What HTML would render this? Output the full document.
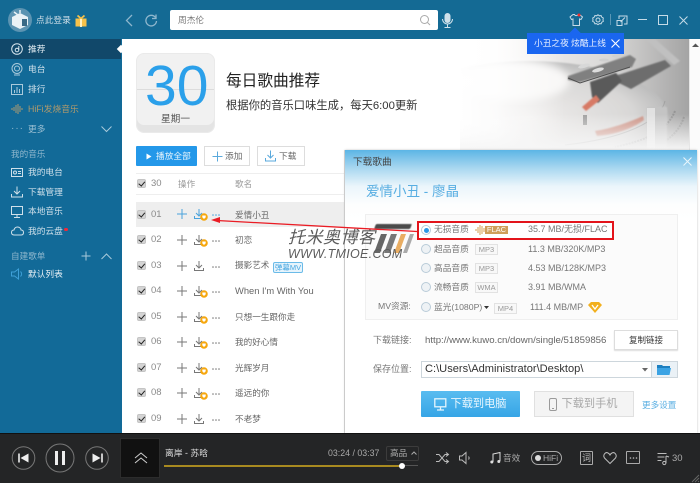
<!DOCTYPE html>
<html lang="zh"><head><meta charset="utf-8"><title>酷我音乐</title>
<style>
html,body{margin:0;padding:0;width:700px;height:483px;overflow:hidden;background:#fff}
body{position:relative;font-family:"Liberation Sans","Noto Sans CJK SC",sans-serif;font-size:9px;color:#555}
.a{position:absolute;white-space:nowrap;line-height:1}
.box{position:absolute}
svg{position:absolute;overflow:visible}
.s{color:#cfe0ea;font-size:8.7px;left:28px}
.c{position:absolute;left:137px;width:9px;height:9px;background:#d4d4d4;border:1px solid #c4c4c4;border-radius:2px;box-sizing:border-box}
.c:after{content:"";position:absolute;left:2px;top:0;width:2.5px;height:4.5px;border:solid #222;border-width:0 1.6px 1.6px 0;transform:rotate(40deg)}
.n{left:151px;color:#8a8a8a;font-size:9.5px}
.t{left:235px;color:#666;font-size:8.6px}
.q{left:434px;color:#777;font-size:8.7px}
.tag{position:absolute;border:1px solid #e2e2e2;background:#f8f8f8;color:#999;font-size:7.5px;line-height:9px;text-align:center;height:9px;width:21px}
.sz{color:#777;font-size:9px}
.r{position:absolute;left:421px;width:8px;height:8px;border-radius:50%;border:1px solid #b9cbd8;background:#eef2f5}
</style></head><body>

<!-- top bar + sidebar -->
<div class="box" style="left:0;top:0;width:700px;height:39px;background:#146a94"></div>
<div class="box" style="left:0;top:39px;width:122px;height:394px;background:#126a98"></div>
<div class="box" style="left:0;top:39px;width:121px;height:20px;background:#11486a"></div>
<div class="box" style="left:118px;top:46px;width:6px;height:6px;background:#fff;transform:rotate(45deg)"></div>

<!-- avatar -->
<div class="box" style="left:8px;top:8px;width:24px;height:24px;border-radius:50%;background:#5c94b2"></div>
<svg style="left:8px;top:8px" width="24" height="24"><path d="M4 9l8-4 8 4v8l-8 4-8-4z" fill="#eaf2f6"/><path d="M14 11h5v7h-5z" fill="#3a6a86"/><path d="M6 4l4 3M12 2v3" stroke="#eaf2f6" stroke-width="1.500"/></svg>
<div class="a" style="left:36px;top:16px;color:#cfdfe8;font-size:8.700px">点此登录</div>
<svg style="left:75px;top:15px" width="12" height="12"><rect x="0.500" y="3.500" width="11" height="8" fill="#f7c24a"/><rect x="5" y="3" width="2" height="9" fill="#fff3c4"/><path d="M6 3.500L2.500 .5M6 3.500l3.500-3" stroke="#f7c24a" stroke-width="1.800"/></svg>

<!-- nav arrows -->
<svg style="left:125px;top:14px" width="14" height="14"><path d="M7 1L1.500 6.500 7 12" fill="none" stroke="#8fb7cd" stroke-width="1.300"/></svg>
<svg style="left:143px;top:13px" width="16" height="16"><path d="M12.500 4.500A5.300 5.300 0 1 0 13.500 8" fill="none" stroke="#8fb7cd" stroke-width="1.300"/><path d="M13 1.500v4h-4" fill="none" stroke="#8fb7cd" stroke-width="1.300"/></svg>

<!-- search -->
<div class="box" style="left:170px;top:10px;width:268px;height:20px;background:#fff;border-radius:2px"></div>
<div class="a" style="left:178px;top:16px;color:#777;font-size:8.700px">周杰伦</div>
<svg style="left:419px;top:14px" width="12" height="12"><circle cx="5.500" cy="5.500" r="4" fill="none" stroke="#aaa" stroke-width="1"/><path d="M8.500 8.500l2.500 2.500" stroke="#aaa"/></svg>
<svg style="left:441px;top:12px" width="13" height="17"><rect x="3.500" y="1" width="6" height="10" rx="3" fill="#cfe0ea"/><path d="M1.500 7a5 5 0 0 0 10 0M6.500 12v3M3.500 15.500h6" fill="none" stroke="#cfe0ea"/></svg>

<!-- window controls -->
<svg style="left:569px;top:13px" width="14" height="14"><path d="M4 1.500L1 4l1.500 2.500L4 6v6.500h6.500V6l1.500.5L13.500 4 10.500 1.500H9c-.5 1.500-3 1.500-3.500 0z" fill="none" stroke="#c6dbe7"/><circle cx="10" cy="2" r="1.500" fill="#ee2b2b"/></svg>
<svg style="left:592px;top:14px" width="12" height="12"><circle cx="6" cy="6" r="2" fill="none" stroke="#c6dbe7"/><path d="M6 .8l1.400 1 1.700-.2.700 1.600 1.500.8-.3 1.700.3 1.700-1.500.8-.7 1.600-1.700-.2-1.400 1-1.400-1-1.700.2-.7-1.600-1.500-.8.3-1.700-.3-1.700 1.500-.8.7-1.600 1.700.2z" fill="none" stroke="#c6dbe7"/></svg>
<div class="box" style="left:610px;top:14px;width:1px;height:11px;background:#5b97b6"></div>
<svg style="left:616px;top:15px" width="12" height="11"><path d="M3 4V1h8v8H8M1 5.500h5v5H1z" fill="none" stroke="#c6dbe7"/><path d="M9 2.500L4.500 7" stroke="#c6dbe7"/></svg>
<div class="box" style="left:638px;top:19px;width:9px;height:1px;background:#c6dbe7"></div>
<div class="box" style="left:658px;top:15px;width:8px;height:8px;border:1px solid #c6dbe7"></div>
<svg style="left:679px;top:16px" width="9" height="9"><path d="M.500.500l8 8M8.500.500l-8 8" stroke="#c6dbe7"/></svg>

<!-- main hero -->
<div class="box" style="left:122px;top:39px;width:578px;height:394px;background:#fff"></div>
<svg style="left:460px;top:39px;overflow:hidden" width="229" height="111" viewBox="-10 0 229 111">
<defs>
<linearGradient id="fd" x1="0" x2="1" y1="0" y2="0"><stop offset="0" stop-color="#fff"/><stop offset=".3" stop-color="#f1efee"/><stop offset=".65" stop-color="#d9d8d7"/><stop offset="1" stop-color="#a4a4a4"/></linearGradient>
<linearGradient id="fl" x1="0" x2="1" y1="0" y2="0"><stop offset="0" stop-color="#fff"/><stop offset=".35" stop-color="#fff" stop-opacity=".85"/><stop offset="1" stop-color="#fff" stop-opacity="0"/></linearGradient>
<linearGradient id="fb" x1="0" x2="0" y1="0" y2="1"><stop offset="0" stop-color="#fff" stop-opacity="0"/><stop offset="1" stop-color="#f6f6f6"/></linearGradient>
<radialGradient id="rec" cx=".5" cy=".5" r=".5"><stop offset="0" stop-color="#eeeceb"/><stop offset=".75" stop-color="#d8d7d6"/><stop offset="1" stop-color="#bcbcbc"/></radialGradient>
<filter id="bl"><feGaussianBlur stdDeviation=".7"/></filter>
<filter id="bl3"><feGaussianBlur stdDeviation="4"/></filter>
</defs>
<rect x="-10" width="229" height="111" fill="url(#fd)"/>
<ellipse cx="60" cy="78" rx="138" ry="56" fill="url(#rec)" filter="url(#bl)"/>
<ellipse cx="45" cy="42" rx="55" ry="20" fill="#f8f7f6" filter="url(#bl3)"/>
<path d="M195 62c-5 22-45 38-100 44" fill="none" stroke="#8a8a8a" opacity=".45"/>
<path d="M205 72c-8 20-30 30-60 36M214 78c-6 18-20 26-35 33" fill="none" stroke="#777" stroke-width="2" stroke-dasharray="2 1" opacity=".45"/>
<path d="M125 92c15-2 35-9 48-15l1 4c-12 9-30 15-47 16z" fill="#c8806f" filter="url(#bl)" opacity=".8"/>
<path d="M175 0h10l25 22-6 4z" fill="#c0c0c0" filter="url(#bl)"/>
<path d="M145 37l50-16 6 6-40 23-12-6z" fill="#6d6d6d" filter="url(#bl)"/>
<path d="M98 37l62-21 6 4-4 8-52 15-12-2z" fill="#808080" filter="url(#bl)"/>
<path d="M98 39l12 5 50-16" fill="none" stroke="#4f4f4f"/>
<ellipse cx="114" cy="27" rx="6" ry="2" fill="#d8d8d8" transform="rotate(-15 114 27)"/>
<ellipse cx="128" cy="31" rx="6" ry="2" fill="#ddd" transform="rotate(-15 128 31)"/>
<ellipse cx="134" cy="21" rx="5" ry="1.500" fill="#d0d0d0"/><ellipse cx="147" cy="17" rx="5" ry="1.500" fill="#d0d0d0"/>
<path d="M120 43l26-9 6 8-24 22-6-6z" fill="#5a5a5a" filter="url(#bl)"/>
<path d="M112 68l14-12 4 5-14 11z" fill="#d77a66" filter="url(#bl)"/>
<path d="M113 76h4v10h-4z" fill="#777" opacity=".6"/>
<rect x="177" y="68" width="20" height="43" fill="#c4c4c4" filter="url(#bl)"/>
<rect x="177" y="69" width="8" height="42" fill="#eee" opacity=".7"/>
<rect x="-10" width="105" height="111" fill="url(#fl)"/>
<rect x="-10" y="75" width="229" height="36" fill="url(#fb)"/>
</svg>

<!-- calendar -->
<div class="box" style="left:137px;top:54px;width:77px;height:78px;background:#f1f1f1;border-radius:7px;box-shadow:inset 0 -7px 0 #e4e4e4,0 0 0 1px #eaeaea"></div>
<div class="box" style="left:137px;top:89px;width:77px;height:1px;background:#dcdcdc"></div>
<div class="a" style="left:145px;top:58px;color:#2ba0ea;font-size:57px;width:61px;text-align:center">30</div>
<div class="a" style="left:161px;top:114.500px;color:#555;font-size:9.700px">星期一</div>
<div class="a" style="left:226px;top:74px;color:#222;font-size:15.700px">每日歌曲推荐</div>
<div class="a" style="left:226px;top:101px;color:#333;font-size:11.300px">根据你的音乐口味生成，每天6:00更新</div>

<!-- action buttons -->
<div class="box" style="left:136px;top:146px;width:61px;height:20px;background:#2498e9;border-radius:1px"></div>
<svg style="left:146px;top:153px" width="6" height="7"><path d="M.500 .500l5 3-5 3z" fill="#fff"/></svg>
<div class="a" style="left:156px;top:152px;color:#e8f4fc;font-size:8.700px">播放全部</div>
<div class="box" style="left:204px;top:146px;width:46px;height:20px;border:1px solid #ddd;box-sizing:border-box"></div>
<svg style="left:212px;top:151px" width="11" height="11"><path d="M5.500.500v10M.500 5.500h10" stroke="#5aa9dc"/></svg>
<div class="a" style="left:225px;top:152px;color:#666;font-size:8.700px">添加</div>
<div class="box" style="left:257px;top:146px;width:48px;height:20px;border:1px solid #ddd;box-sizing:border-box"></div>
<svg style="left:265px;top:150px" width="11" height="12"><path d="M5.500.500v7M2.500 5l3 3 3-3M.500 8v3h10V8" fill="none" stroke="#5aa9dc"/></svg>
<div class="a" style="left:279px;top:152px;color:#666;font-size:8.700px">下载</div>

<!-- table header -->
<div class="box" style="left:136px;top:173px;width:209px;height:1px;background:#eee"></div>
<div class="box" style="left:136px;top:194px;width:209px;height:1px;background:#eee"></div>
<div class="c" style="top:179px"></div>
<div class="a n" style="top:179px">30</div>
<div class="a" style="left:178px;top:180px;color:#999;font-size:8.600px">操作</div>
<div class="a" style="left:235px;top:180px;color:#999;font-size:8.600px">歌名</div>
<div class="box" style="left:136px;top:202px;width:209px;height:25px;background:#eeeeee"></div>
<div class="box" style="left:344px;top:150px;width:1px;height:283px;background:#ddd"></div>

<!-- defs for row icons -->
<svg width="0" height="0" style="left:0;top:0"><defs>
<g id="pl"><path d="M5 0v10M0 5h10" stroke="currentColor" stroke-width="1"/></g>
<g id="dl"><path d="M5 .500v6.500M2 4.500l3 3 3-3M.500 7.500v2.500h9V7.500" fill="none" stroke="currentColor"/></g>
<g id="bd"><circle cx="4" cy="4" r="3.800" fill="#f6a70e"/><path d="M2.300 2.500h3.400v1.800L4 6 2.300 4.300z" fill="#fff"/></g>
<g id="dt"><circle cx="1" cy="1" r=".8" fill="currentColor"/><circle cx="4" cy="1" r=".8" fill="currentColor"/><circle cx="7" cy="1" r=".8" fill="currentColor"/></g>
</defs></svg>

<!-- rows -->
<div class="c" style="top:210px"></div><div class="a n" style="top:209.500px">01</div>
<svg style="left:177px;top:209px;color:#4aa3dc" width="50" height="14"><use href="#pl"/><use href="#dl" x="17" y="-.5"/><use href="#bd" x="23" y="4"/><use href="#dt" x="35" y="5"/></svg>
<div class="a t" style="top:210.500px">爱情小丑</div>

<div class="c" style="top:235px"></div><div class="a n" style="top:235px">02</div>
<svg style="left:177px;top:235px;color:#777" width="50" height="14"><use href="#pl"/><use href="#dl" x="17" y="-.5"/><use href="#bd" x="23" y="4"/><use href="#dt" x="35" y="5"/></svg>
<div class="a t" style="top:236px">初恋</div>

<div class="c" style="top:261px"></div><div class="a n" style="top:261px">03</div>
<svg style="left:177px;top:261px;color:#777" width="50" height="14"><use href="#pl"/><use href="#dl" x="17" y="-.5"/><use href="#dt" x="35" y="5"/></svg>
<div class="a t" style="top:261px">摄影艺术</div>
<div class="a" style="left:273px;top:262px;width:28px;height:9px;border:1px solid #6bbbe8;border-radius:2px;background:#e7f4fc;color:#46a6e0;font-size:7.500px;line-height:9px;text-align:center">弹幕MV</div>

<div class="c" style="top:286px"></div><div class="a n" style="top:286px">04</div>
<svg style="left:177px;top:286px;color:#777" width="50" height="14"><use href="#pl"/><use href="#dl" x="17" y="-.5"/><use href="#bd" x="23" y="4"/><use href="#dt" x="35" y="5"/></svg>
<div class="a t" style="top:286.500px;font-size:9.350px">When I'm With You</div>

<div class="c" style="top:312px"></div><div class="a n" style="top:312px">05</div>
<svg style="left:177px;top:312px;color:#777" width="50" height="14"><use href="#pl"/><use href="#dl" x="17" y="-.5"/><use href="#bd" x="23" y="4"/><use href="#dt" x="35" y="5"/></svg>
<div class="a t" style="top:313px">只想一生跟你走</div>

<div class="c" style="top:337px"></div><div class="a n" style="top:337px">06</div>
<svg style="left:177px;top:337px;color:#777" width="50" height="14"><use href="#pl"/><use href="#dl" x="17" y="-.5"/><use href="#bd" x="23" y="4"/><use href="#dt" x="35" y="5"/></svg>
<div class="a t" style="top:338px">我的好心情</div>

<div class="c" style="top:363px"></div><div class="a n" style="top:363px">07</div>
<svg style="left:177px;top:363px;color:#777" width="50" height="14"><use href="#pl"/><use href="#dl" x="17" y="-.5"/><use href="#bd" x="23" y="4"/><use href="#dt" x="35" y="5"/></svg>
<div class="a t" style="top:364px">光辉岁月</div>

<div class="c" style="top:388px"></div><div class="a n" style="top:388px">08</div>
<svg style="left:177px;top:388px;color:#777" width="50" height="14"><use href="#pl"/><use href="#dl" x="17" y="-.5"/><use href="#bd" x="23" y="4"/><use href="#dt" x="35" y="5"/></svg>
<div class="a t" style="top:389px">遥远的你</div>

<div class="c" style="top:414px"></div><div class="a n" style="top:414px">09</div>
<svg style="left:177px;top:414px;color:#777" width="50" height="14"><use href="#pl"/><use href="#dl" x="17" y="-.5"/><use href="#dt" x="35" y="5"/></svg>
<div class="a t" style="top:415px">不老梦</div>

<!-- scrollbar -->
<div class="box" style="left:689px;top:39px;width:11px;height:111px;background:#fbfbfb;border-left:1px solid #e6e6e6;box-sizing:border-box"></div>
<svg style="left:692px;top:43px" width="7" height="5"><path d="M0 4l3.500-3.500L7 4z" fill="#555"/></svg>

<!-- sidebar items -->
<svg style="left:11px;top:43px;color:#d7e6ee" width="12" height="12"><circle cx="6" cy="6" r="5.300" fill="none" stroke="currentColor"/><circle cx="6" cy="7" r="1.800" fill="none" stroke="currentColor"/><path d="M7.800 7V3" stroke="currentColor"/></svg>
<div class="a" style="left:28px;top:45px;color:#e4eef4;font-size:8.700px">推荐</div>
<svg style="left:11px;top:63px;color:#a9cadb" width="12" height="13"><circle cx="6" cy="5.500" r="5" fill="none" stroke="currentColor"/><circle cx="6" cy="5.500" r="2.500" fill="none" stroke="currentColor"/><path d="M3 12h6" stroke="currentColor"/></svg>
<div class="a s" style="top:65px">电台</div>
<svg style="left:11px;top:84px;color:#a9cadb" width="12" height="11"><rect x=".500" y=".500" width="11" height="10" fill="none" stroke="currentColor"/><path d="M3.500 9V6M6 9V3M8.500 9V5" stroke="currentColor"/></svg>
<div class="a s" style="top:85px">排行</div>
<svg style="left:11px;top:103px" width="13" height="12"><path d="M1 5v2M3 4v4M5 2v8M7 1v10M9 3v6M11 5v2" stroke="#a99a72"/></svg>
<div class="a" style="left:28px;top:105px;color:#b09a6c;font-size:8.800px">HiFi发烧音乐</div>
<div class="a" style="left:11px;top:124px;color:#8fb7cd;font-size:10px;letter-spacing:1px">···</div>
<div class="a" style="left:28px;top:125px;color:#9cc0d3;font-size:8.700px">更多</div>
<svg style="left:101px;top:126px" width="11" height="7"><path d="M.500.500l5 5 5-5" fill="none" stroke="#a9cadb"/></svg>
<div class="a" style="left:11px;top:150px;color:#8fb7cd;font-size:8.600px">我的音乐</div>
<svg style="left:11px;top:166px;color:#cfe0ea" width="12" height="11"><rect x=".500" y="2.500" width="11" height="8" fill="none" stroke="currentColor"/><circle cx="4" cy="6.500" r="1.500" fill="none" stroke="currentColor"/><path d="M7 5.500h3M7 7.500h3" stroke="currentColor"/></svg>
<div class="a s" style="top:168px">我的电台</div>
<svg style="left:11px;top:186px;color:#cfe0ea" width="12" height="12"><path d="M6 .500v7M3 5l3 3 3-3M.500 8v3h11V8" fill="none" stroke="currentColor"/></svg>
<div class="a s" style="top:187.500px">下载管理</div>
<svg style="left:11px;top:206px;color:#cfe0ea" width="12" height="12"><rect x=".500" y=".500" width="11" height="8" fill="none" stroke="currentColor"/><path d="M3 11.500h6M6 9v2" stroke="currentColor"/></svg>
<div class="a s" style="top:207px">本地音乐</div>
<svg style="left:11px;top:226px;color:#cfe0ea" width="13" height="10"><path d="M3.500 9C1 9 .500 7.500.500 6.500c0-1.500 1-2.500 2.500-2.500C3.500 2 5 1 6.500 1 8.500 1 10 2.500 10 4c1.500 0 2.500 1 2.500 2.500S11.500 9 10 9z" fill="none" stroke="currentColor"/></svg>
<div class="a s" style="top:227px">我的云盘</div>
<div class="box" style="left:64px;top:228px;width:4px;height:3px;border-radius:2px;background:#f02a3a"></div>
<div class="a" style="left:11px;top:252px;color:#8fb7cd;font-size:8.600px">自建歌单</div>
<svg style="left:81px;top:251px" width="10" height="10"><path d="M5 .500v9M.500 5h9" stroke="#a9cadb"/></svg>
<svg style="left:101px;top:253px" width="11" height="7"><path d="M.500 6l5-5 5 5" fill="none" stroke="#a9cadb"/></svg>
<svg style="left:11px;top:268px" width="13" height="12"><path d="M.500 4h3L7.500 1v10l-4-3h-3z" fill="none" stroke="#3ea0d8"/><path d="M9.500 3.500c1.500 1.500 1.500 3.500 0 5" fill="none" stroke="#3ea0d8"/></svg>
<div class="a s" style="top:269.500px;color:#e4eef4">默认列表</div>

<!-- download dialog -->
<div class="box" style="left:345px;top:150px;width:352px;height:283px;background:linear-gradient(#5cb5e5 0,#a8d7f0 18px,#eaf5fb 36px,#fdfefe 55px,#fff 70px);box-shadow:0 0 2px rgba(0,0,0,.25)"></div>
<div class="a" style="left:353px;top:157.500px;color:#444;font-size:9.700px">下载歌曲</div>
<svg style="left:683px;top:157px" width="9" height="9"><path d="M.500.500l8 8M8.500.500l-8 8" stroke="#eaf6fc" stroke-width="1"/></svg>
<div class="a" style="left:366px;top:185px;color:#58aee2;font-size:13.500px">爱情小丑 - 廖晶</div>
<div class="box" style="left:365px;top:214px;width:313px;height:106px;background:#fbfbfb;border:1px solid #efefef;box-sizing:border-box"></div>

<div class="box" style="left:417px;top:221px;width:197px;height:19px;border:2px solid #e3141b;box-sizing:border-box;background:#fff"></div>
<div class="r" style="top:225px;background:#fff"></div>
<div class="box" style="left:423.500px;top:227.500px;width:5px;height:5px;border-radius:50%;background:#2b98e6"></div>
<div class="a q" style="top:225px">无损音质</div>
<svg style="left:475px;top:224px" width="11" height="12"><path d="M1 5v2M3 3v6M5 1v10M7 2v8M9 4v4" stroke="#d59f50"/></svg>
<div class="a" style="left:485px;top:225.500px;width:23px;height:8px;background:#cf9f5b;color:#fff;font-size:7.500px;line-height:8px;text-align:center">FLAC</div>
<div class="a sz" style="left:528px;top:224.500px">35.7 MB/无损/FLAC</div>

<div class="r" style="top:244px"></div><div class="a q" style="top:244.500px">超品音质</div>
<div class="tag" style="left:475px;top:244px">MP3</div><div class="a sz" style="left:528px;top:244.500px">11.3 MB/320K/MP3</div>
<div class="r" style="top:263px"></div><div class="a q" style="top:263.500px">高品音质</div>
<div class="tag" style="left:475px;top:263px">MP3</div><div class="a sz" style="left:528px;top:263.500px">4.53 MB/128K/MP3</div>
<div class="r" style="top:282px"></div><div class="a q" style="top:282.500px">流畅音质</div>
<div class="tag" style="left:475px;top:282px;">WMA</div><div class="a sz" style="left:528px;top:282.500px">3.91 MB/WMA</div>
<div class="a" style="left:378px;top:302px;color:#777;font-size:8.700px">MV资源:</div>
<div class="r" style="top:302px"></div><div class="a q" style="top:303px">蓝光(1080P)</div>
<svg style="left:484px;top:306px" width="5" height="3"><path d="M0 0h5L2.500 3z" fill="#333"/></svg>
<div class="tag" style="left:494px;top:303px">MP4</div>
<div class="a sz" style="left:530px;top:303px">111.4 MB/MP</div>
<svg style="left:588px;top:302px" width="14" height="11"><path d="M0 3l3-3h8l3 3-7 8z" fill="#f2b01e"/><path d="M4 3l3 4 3-4" fill="none" stroke="#fff" stroke-width="1.300"/></svg>

<div class="a" style="left:373px;top:336px;color:#777;font-size:9px">下载链接:</div>
<div class="a" style="left:425px;top:335.500px;color:#666;font-size:9.650px">http://www.kuwo.cn/down/single/51859856</div>
<div class="box" style="left:614px;top:330px;width:64px;height:20px;background:#fff;border:1px solid #ddd;box-sizing:border-box;box-shadow:0 1px 1px #ddd"></div>
<div class="a" style="left:629px;top:336px;color:#333;font-size:8.500px">复制链接</div>

<div class="a" style="left:373px;top:365px;color:#777;font-size:9px">保存位置:</div>
<div class="box" style="left:421px;top:361px;width:231px;height:17px;background:#fff;border:1px solid #cdd6dc;box-sizing:border-box"></div>
<div class="a" style="left:425px;top:364px;color:#333;font-size:11.100px">C:\Users\Administrator\Desktop\</div>
<svg style="left:642px;top:368px" width="6" height="4"><path d="M0 0h6L3 3.500z" fill="#666"/></svg>
<div class="box" style="left:651px;top:361px;width:27px;height:17px;background:#eaf1f6;border:1px solid #cdd6dc;box-sizing:border-box"></div>
<svg style="left:657px;top:364px" width="15" height="11"><path d="M0 1h5l1 1h7v2H0z" fill="#1d7fc0"/><path d="M0 4h14l-1.500 7H0z" fill="#3ba3e4"/></svg>

<div class="box" style="left:421px;top:391px;width:99px;height:26px;background:linear-gradient(#59bcf0,#36a5e6);border-radius:1px"></div>
<svg style="left:434px;top:398px" width="14" height="14"><rect x=".800" y=".800" width="11" height="8" fill="none" stroke="#e5f5fd" stroke-width="1.300"/><path d="M3 12h7M6.500 9.500V12" stroke="#e5f5fd" stroke-width="1.300"/></svg>
<div class="a" style="left:450.500px;top:398.500px;color:#e8f6fe;font-size:11.200px">下载到电脑</div>
<div class="box" style="left:534px;top:391px;width:100px;height:26px;background:#f4f4f4;border:1px solid #e0e0e0;box-sizing:border-box"></div>
<svg style="left:549px;top:398px" width="9" height="14"><rect x=".500" y=".500" width="7" height="12" rx="1.500" fill="none" stroke="#9a9a9a"/><path d="M3 10.500h2" stroke="#9a9a9a"/></svg>
<div class="a" style="left:561.500px;top:398.500px;color:#a8a8a8;font-size:11.200px">下载到手机</div>
<div class="a" style="left:642px;top:400.500px;color:#58aee2;font-size:8.600px">更多设置</div>

<!-- watermark and arrow -->
<div class="box" style="left:375px;top:224px;width:36px;height:5px;background:#4a4a4a;transform:skewX(-20deg);border-radius:1px;filter:blur(.4px)"></div>
<svg style="left:372px;top:231px" width="42" height="22"><path d="M2 22L9 3h6L8 22z" fill="#666"/><path d="M12 22l7-19h6l-7 19z" fill="#777"/><path d="M22 22l7-19h5l-7 19z" fill="#e9ad62"/><path d="M31 22l7-19h4l-7 19z" fill="#aaa"/></svg>
<div class="a" style="left:288px;top:229px;color:#5c5c5c;font-size:17px;font-style:italic;letter-spacing:.5px">托米奥博客</div>
<div class="a" style="left:288px;top:247.500px;color:#5c5c5c;font-size:12.500px;font-style:italic;letter-spacing:.3px">WWW.TMIOE.COM</div>
<svg style="left:0;top:0;pointer-events:none" width="700" height="483"><path d="M417 231.500L217 220.500" stroke="#ea1c24" stroke-width="1.300"/><path d="M211 220l9-3v6z" fill="#ea1c24"/></svg>

<!-- tooltip -->
<div class="box" style="left:527px;top:33px;width:97px;height:21px;background:#1a66f0"></div>
<div class="box" style="left:571px;top:29px;width:8px;height:8px;background:#1a66f0;transform:rotate(45deg)"></div>
<div class="a" style="left:534px;top:39px;color:#eaf1ff;font-size:8.700px">小丑之夜 炫酷上线</div>
<svg style="left:611px;top:39px" width="9" height="9"><path d="M.500.500l8 8M8.500.500l-8 8" stroke="#fff" stroke-width="1.100"/></svg>

<!-- footer player -->
<div class="box" style="left:0;top:433px;width:700px;height:50px;background:#242526;border-top:1px solid #111;box-sizing:border-box"></div>
<svg style="left:0;top:433px;color:#d4d4d4" width="125" height="50">
<circle cx="23.500" cy="25" r="11.300" fill="none" stroke="#777"/>
<path d="M19 20.500v9" stroke="#eee" stroke-width="1.600"/><path d="M28.500 20.500v9l-8-4.500z" fill="#eee"/>
<circle cx="60" cy="25" r="14" fill="none" stroke="#777"/>
<rect x="55" y="18" width="3" height="14" fill="#eee"/><rect x="62" y="18" width="3" height="14" fill="#eee"/>
<circle cx="97" cy="25" r="11.300" fill="none" stroke="#777"/>
<path d="M102 20.500v9" stroke="#eee" stroke-width="1.600"/><path d="M92.500 20.500v9l8-4.500z" fill="#eee"/>
</svg>
<div class="box" style="left:121px;top:439px;width:38px;height:38px;background:#111;box-shadow:0 0 0 1px #2c2c2c"></div>
<svg style="left:134px;top:452px" width="14" height="13"><path d="M1 6l6-5 6 5M1 11l6-5 6 5" fill="none" stroke="#cfcfcf"/></svg>
<div class="a" style="left:165px;top:449px;color:#ddd;font-size:8.800px">离岸 - 苏晗</div>
<div class="box" style="left:164px;top:465px;width:238px;height:1.500px;background:#a88a20"></div>
<div class="box" style="left:402px;top:465px;width:16px;height:1px;background:#555"></div>
<div class="box" style="left:399px;top:462.500px;width:6px;height:6px;border-radius:50%;background:#fff"></div>
<div class="a" style="left:328px;top:449px;color:#aaa;font-size:8.800px">03:24 / 03:37</div>
<div class="box" style="left:386px;top:446px;width:33px;height:15px;border:1px solid #3c3c3c;box-sizing:border-box;border-radius:2px"></div>
<div class="a" style="left:390px;top:449px;color:#aaa;font-size:8.600px">高品</div>
<svg style="left:411px;top:451px" width="6" height="4"><path d="M.500 3.500L3 1l2.500 2.500" fill="none" stroke="#aaa"/></svg>

<svg style="left:436px;top:452px" width="13" height="12"><path d="M0 2.500h3l6 7h3M0 9.500h3l6-7h3" fill="none" stroke="#bbb"/><path d="M10 .500l2.500 2-2.500 2M10 7.500l2.500 2-2.500 2" fill="none" stroke="#bbb"/></svg>
<svg style="left:459px;top:452px" width="12" height="12"><path d="M.500 4h2.500L7 .500v11L3 8H.500z" fill="none" stroke="#bbb"/><path d="M9.500 4.500c.8 1 .8 2 0 3" fill="none" stroke="#bbb"/></svg>
<svg style="left:490px;top:452px" width="11" height="12"><path d="M3 10V2l7-1.500V9" fill="none" stroke="#ddd"/><circle cx="1.800" cy="10" r="1.500" fill="#ddd"/><circle cx="8.800" cy="9.500" r="1.500" fill="#ddd"/></svg>
<div class="a" style="left:503px;top:454px;color:#aaa;font-size:8.600px">音效</div>
<div class="box" style="left:531px;top:451px;width:31px;height:14px;border:1px solid #aaa;border-radius:8px;box-sizing:border-box"></div>
<div class="box" style="left:535px;top:455px;width:6px;height:6px;border-radius:50%;background:#ddd"></div>
<div class="a" style="left:543px;top:454px;color:#aaa;font-size:8.500px">HiFi</div>
<div class="box" style="left:580px;top:451px;width:13px;height:14px;border:1px solid #aaa;border-radius:1px;box-sizing:border-box"></div>
<div class="a" style="left:582px;top:454px;color:#bbb;font-size:9px">词</div>
<svg style="left:603px;top:452px" width="14" height="12"><path d="M7 11.500L1.500 6C-.5 3 2.500-.5 5 1c1 .5 1.500 1 2 2 .5-1 1-1.500 2-2 2.500-1.500 5.500 2 3.500 5z" fill="none" stroke="#bbb"/></svg>
<div class="box" style="left:626px;top:451px;width:14px;height:13px;border:1px solid #aaa;border-radius:1px;box-sizing:border-box"></div>
<svg style="left:629.500px;top:457px;color:#bbb" width="8" height="2"><use href="#dt" x="-.5"/></svg>
<svg style="left:657px;top:452px" width="13" height="13"><path d="M.500 1.500h9M.500 5h7M.500 8.500h4" stroke="#bbb"/><path d="M9 4v7" stroke="#bbb"/><circle cx="7.300" cy="11" r="1.600" fill="none" stroke="#bbb"/><path d="M9 4l3 1" stroke="#bbb"/></svg>
<div class="a" style="left:672px;top:454px;color:#aaa;font-size:9.500px">30</div>
<svg style="left:691px;top:474px" width="9" height="9"><path d="M8 1L1 8M8 4L4 8M8 7L7 8" stroke="#666"/></svg>

</body></html>
